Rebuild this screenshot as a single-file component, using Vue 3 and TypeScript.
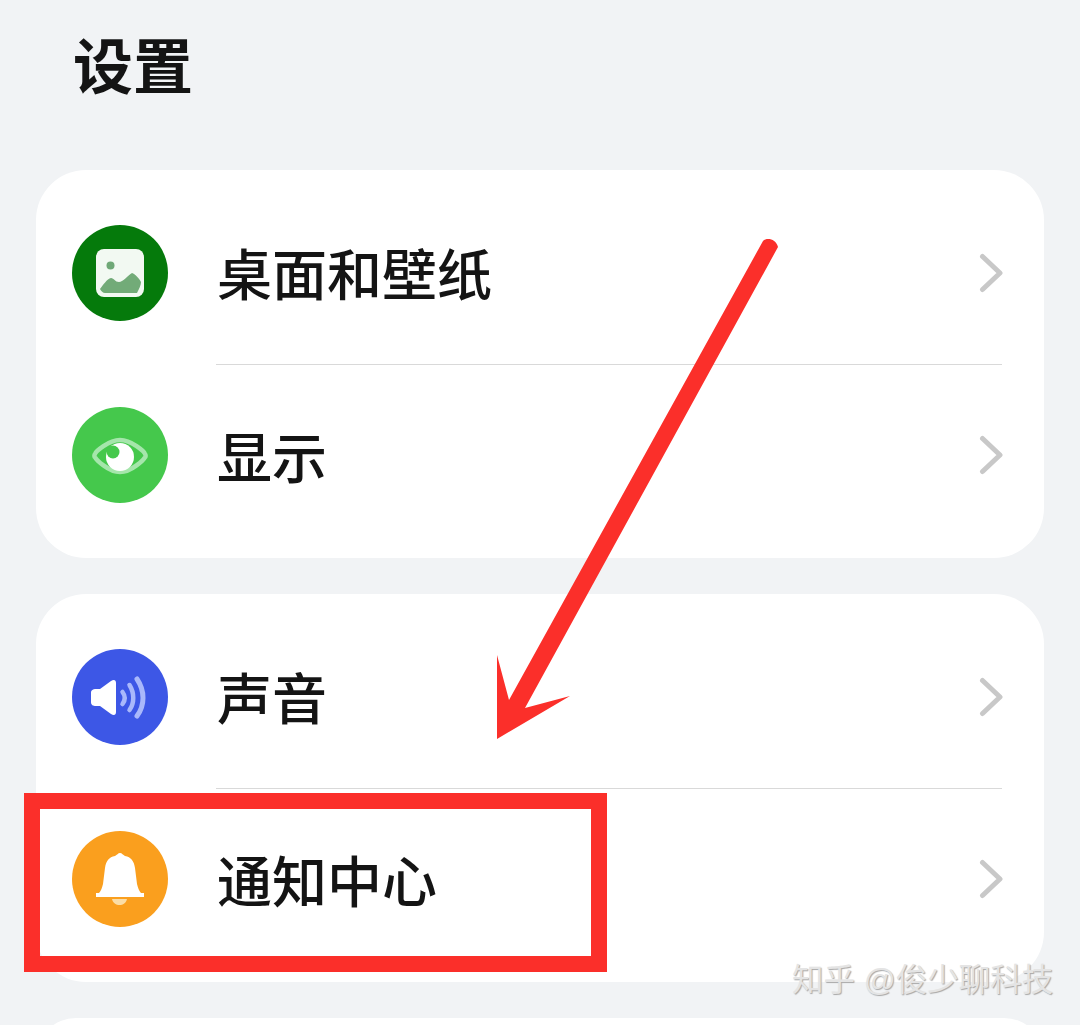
<template>
  <div class="page">
    <h1 class="title">设置</h1>

    <section v-for="(group, i) in groups" :key="i" class="card">
      <template v-for="(item, j) in group" :key="item.label">
        <div v-if="j > 0" class="divider"></div>
        <div class="row">
          <span class="icon" :style="{ background: item.color }">
            <svg v-if="item.icon === 'wallpaper'" viewBox="0 0 96 96" width="96" height="96">
              <rect x="24" y="24" width="48" height="48" rx="8" fill="#f2f9f2" />
              <circle cx="38.500" cy="40.500" r="4" fill="#6fa877" />
              <path d="M28 64 C31 60 35 54 39 53 C42 53 43 57 47 57 C51 57 55 51 60 48 C63 49 67 53 69 57 C69 60 67 64 65 68 L33 68 C31 68 29 66 28 64 Z" fill="#72ab78" />
            </svg>
            <svg v-else-if="item.icon === 'eye'" viewBox="0 0 96 96" width="96" height="96">
              <path d="M23.500 46 C24 45 36 33 48 33 C60 33 72 45 72.500 46 C74 48 74 50 72.500 51 C72 52 60 65 48 65 C36 65 24 52 23.500 51 C22 50 22 48 23.500 46 Z" fill="none" stroke="#a5e6ab" stroke-width="4.500" />
              <circle cx="48" cy="50" r="14" fill="#ffffff" />
              <circle cx="41" cy="45" r="6.500" fill="#45c84c" />
            </svg>
            <svg v-else-if="item.icon === 'sound'" viewBox="0 0 96 96" width="96" height="96">
              <path d="M19 44 C19 41 21 40 24 40 L28 40 L39 32 C42 30 44 31 44 34 L44 63 C44 66 42 67 39 65 L28 57 L24 57 C21 57 19 56 19 53 Z" fill="#ffffff" />
              <g fill="none" stroke="#a9b8fb" stroke-linecap="round">
                <path d="M50.500 43 C53.500 47 53.500 51 50.500 55" stroke-width="4.500" />
                <path d="M57.500 36 C62.500 44 62.500 54 57.500 61" stroke-width="4.500" />
                <path d="M65 30 C73 42 73 56 65 67" stroke-width="5" />
              </g>
            </svg>
            <svg v-else viewBox="0 0 96 96" width="96" height="96">
              <path d="M48 22 C50 22 51 24 53 25 C59 26 62 30 63 37 L65 53 C66 57 67 60 69 62 L72 62 L72 66 L24 66 L24 62 L27 62 C29 60 30 57 31 53 L33 37 C34 30 37 26 43 25 C45 24 46 22 48 22 Z" fill="#ffffff" />
              <path d="M40 68 L55 68 C54 72 51 74 47.500 74 C44 74 41 72 40 68 Z" fill="#fbdda6" />
            </svg>
          </span>
          <span class="label">{{ item.label }}</span>
          <svg class="chevron" viewBox="0 0 24 40" width="24" height="40">
            <path d="M3.500 3.500 L21 20 L3.500 36.500" fill="none" stroke="#c8c8c8" stroke-width="5" stroke-linecap="round" stroke-linejoin="round" />
          </svg>
        </div>
      </template>
    </section>

    <section class="card card-next"></section>

    <div class="highlight"></div>
    <svg class="arrow" viewBox="0 0 1080 1025" width="1080" height="1025">
      <path d="M763 241 C767 237 776 239 778 247 L525 708 L570 696 L497 739 L497 655 L509 700 Z" fill="#fb2f2a" />
    </svg>
    <div class="watermark">知乎 @俊少聊科技</div>
  </div>
</template>

<script setup lang="ts">
interface Item {
  label: string
  color: string
  icon: string
}

const groups: Item[][] = [
  [
    { label: '桌面和壁纸', color: '#057a0b', icon: 'wallpaper' },
    { label: '显示', color: '#45c84c', icon: 'eye' },
  ],
  [
    { label: '声音', color: '#3d57e6', icon: 'sound' },
    { label: '通知中心', color: '#fa9f1e', icon: 'bell' },
  ],
]
</script>

<style>
html,
body {
  margin: 0;
  background: #f1f3f5;
}
</style>

<style scoped>
.page {
  position: relative;
  width: 1080px;
  height: 1025px;
  overflow: hidden;
  box-sizing: border-box;
  padding: 0 36px;
  background: #f1f3f5;
  font-family: "Liberation Sans", "Noto Sans CJK SC", sans-serif;
}

.title {
  margin: 0 0 0 37px;
  height: 170px;
  padding-top: 29px;
  box-sizing: border-box;
  font-size: 60px;
  line-height: 80px;
  font-weight: 700;
  color: #141414;
}

.card {
  background: #fff;
  border-radius: 50px;
  margin-bottom: 36px;
}

.card-next {
  height: 80px;
}

.row {
  display: flex;
  align-items: center;
  height: 194px;
  padding: 12px 41px 0 36px;
  box-sizing: border-box;
}

.divider {
  height: 1px;
  margin: 0 42px 0 180px;
  background: #d9d9d9;
}

.row + .divider + .row {
  height: 193px;
  padding: 0 41px 14px 36px;
}

.icon {
  width: 96px;
  height: 96px;
  border-radius: 50%;
  flex: none;
  display: flex;
}

.label {
  flex: 1;
  margin-left: 49px;
  padding-top: 6px;
  font-size: 55px;
  line-height: 70px;
  font-weight: 500;
  color: #141414;
}

.row + .divider + .row .label {
  padding-top: 8px;
}

.chevron {
  flex: none;
}

.highlight {
  position: absolute;
  left: 24px;
  top: 793px;
  width: 583px;
  height: 179px;
  box-sizing: border-box;
  border: 16px solid #fb2f2a;
}

.arrow {
  position: absolute;
  left: 0;
  top: 0;
}

.watermark {
  position: absolute;
  left: 792px;
  top: 958px;
  font-size: 31.500px;
  line-height: 44px;
  white-space: nowrap;
  color: #e4e4e4;
  text-shadow: 1px 1px 1px #a8a8a8;
}
</style>
